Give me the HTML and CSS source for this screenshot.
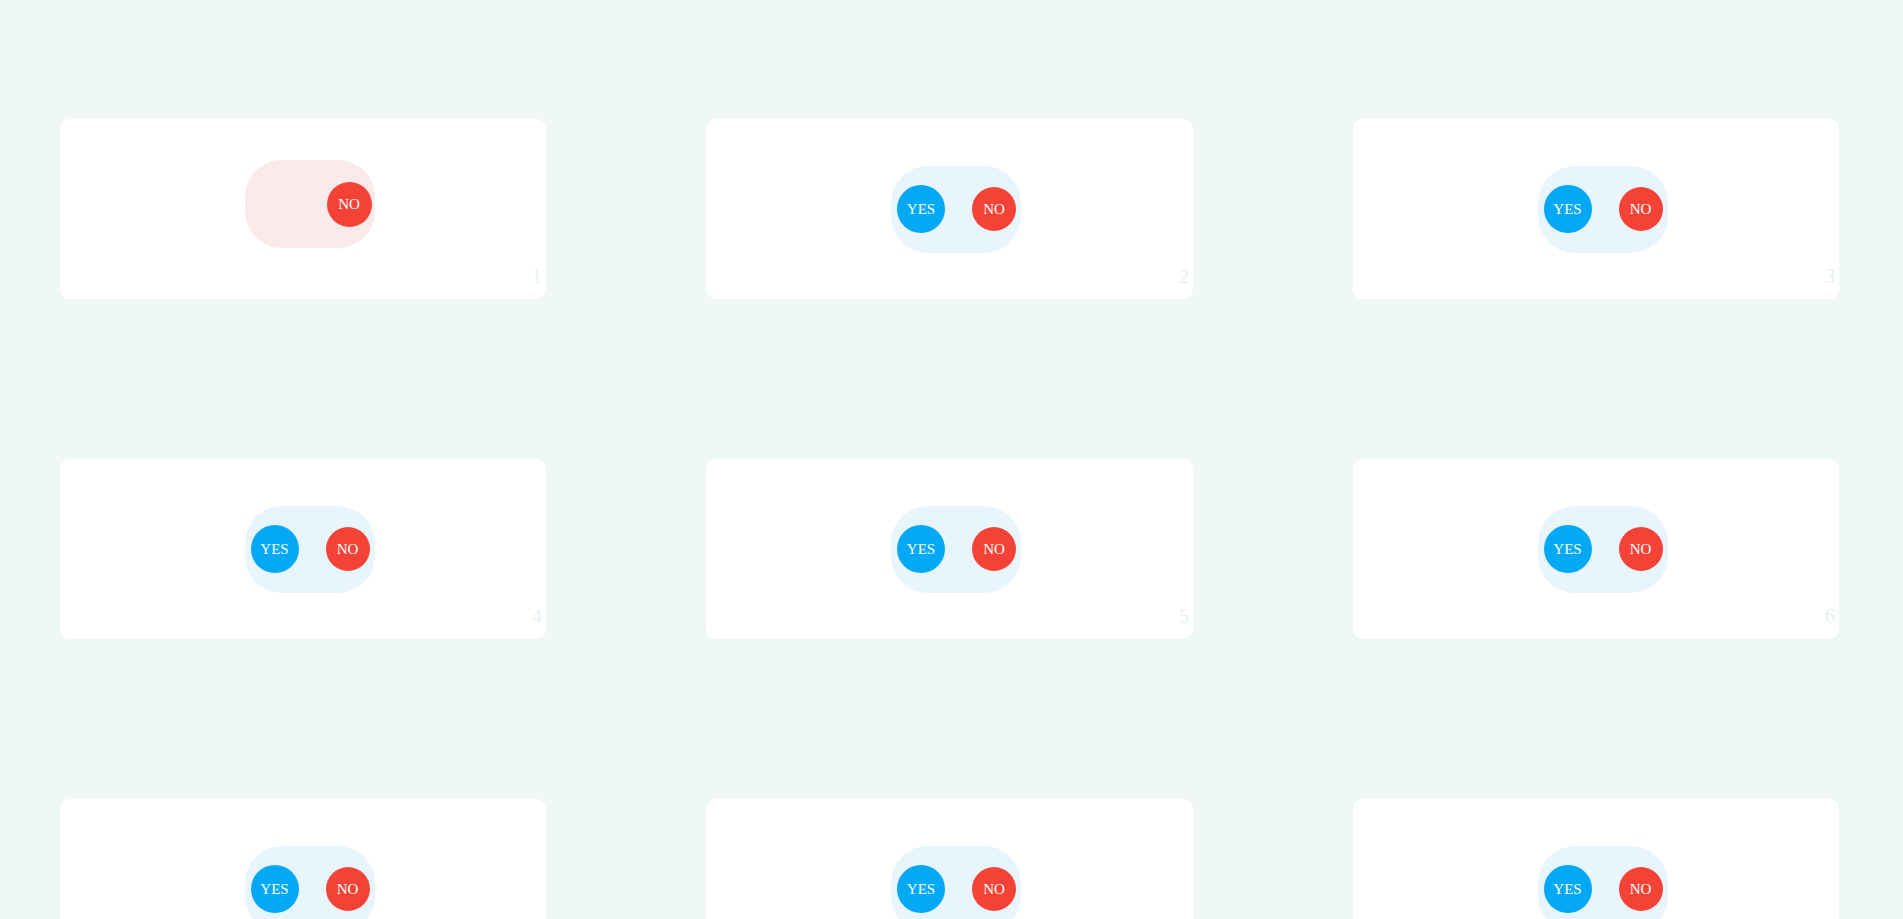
FILE: index.html
```html
<!DOCTYPE html>
<html>
<head>
<meta charset="utf-8">
<link rel="stylesheet" href="styles.css">
</head>
<body>
<main class="grid">
  <div class="card">
    <div class="pill pill-no">
      <span class="btn no no-solo">NO</span>
    </div>
    <span class="num">1</span>
  </div>
  <div class="card"><div class="pill"><span class="btn yes">YES</span><span class="btn no">NO</span></div><span class="num">2</span></div>
  <div class="card"><div class="pill"><span class="btn yes">YES</span><span class="btn no">NO</span></div><span class="num">3</span></div>
  <div class="card"><div class="pill"><span class="btn yes">YES</span><span class="btn no">NO</span></div><span class="num">4</span></div>
  <div class="card"><div class="pill"><span class="btn yes">YES</span><span class="btn no">NO</span></div><span class="num">5</span></div>
  <div class="card"><div class="pill"><span class="btn yes">YES</span><span class="btn no">NO</span></div><span class="num">6</span></div>
  <div class="card"><div class="pill"><span class="btn yes">YES</span><span class="btn no">NO</span></div><span class="num">7</span></div>
  <div class="card"><div class="pill"><span class="btn yes">YES</span><span class="btn no">NO</span></div><span class="num">8</span></div>
  <div class="card"><div class="pill"><span class="btn yes">YES</span><span class="btn no">NO</span></div><span class="num">9</span></div>
  <div class="card"><div class="pill"><span class="btn yes">YES</span><span class="btn no">NO</span></div><span class="num">10</span></div>
  <div class="card"><div class="pill"><span class="btn yes">YES</span><span class="btn no">NO</span></div><span class="num">11</span></div>
  <div class="card"><div class="pill"><span class="btn yes">YES</span><span class="btn no">NO</span></div><span class="num">12</span></div>
  <div class="card"><div class="pill"><span class="btn yes">YES</span><span class="btn no">NO</span></div><span class="num">13</span></div>
  <div class="card"><div class="pill"><span class="btn yes">YES</span><span class="btn no">NO</span></div><span class="num">14</span></div>
  <div class="card"><div class="pill"><span class="btn yes">YES</span><span class="btn no">NO</span></div><span class="num">15</span></div>
  <div class="card"><div class="pill"><span class="btn yes">YES</span><span class="btn no">NO</span></div><span class="num">16</span></div>
  <div class="card"><div class="pill"><span class="btn yes">YES</span><span class="btn no">NO</span></div><span class="num">17</span></div>
  <div class="card"><div class="pill"><span class="btn yes">YES</span><span class="btn no">NO</span></div><span class="num">18</span></div>
</main>
</body>
</html>
```
FILE: styles.css
```css
html, body {
  margin: 0;
  padding: 0;
  background: #eff8f7;
  font-family: "Liberation Serif", "Times New Roman", serif;
}

html::-webkit-scrollbar {
  width: 15px;
  background: #f1f1f1;
}

html::-webkit-scrollbar-thumb {
  background: #c1c1c1;
  border: 4px solid #f1f1f1;
  border-top-width: 17px;
}

.grid {
  display: grid;
  grid-template-columns: 486px 487px 486px;
  column-gap: 160px;
  row-gap: 160px;
  padding: 119px 0 119px 60px;
}

.card {
  position: relative;
  height: 180px;
  background: #ffffff;
  border-radius: 10px;
  display: flex;
  align-items: center;
  justify-content: center;
  padding-left: 13px;
}

.pill {
  width: 130px;
  height: 87px;
  box-sizing: border-box;
  border-radius: 37px;
  background: #e9f5fc;
  display: flex;
  align-items: center;
  justify-content: space-between;
  padding: 0 5px 0 6px;
}

.pill-no {
  height: 88px;
  background: #fbeaea;
  justify-content: flex-end;
  padding: 0 3px 0 0;
  transform: translateY(-5px);
}

.btn {
  display: flex;
  align-items: center;
  justify-content: center;
  border-radius: 50%;
  color: #ffffff;
  font-size: 15px;
  line-height: 1;
}

.yes {
  width: 48px;
  height: 48px;
  background: #03a9f4;
}

.no {
  width: 44px;
  height: 44px;
  background: #f44336;
}

.no-solo {
  width: 45px;
  height: 45px;
}

.num {
  position: absolute;
  right: 4px;
  bottom: 13px;
  font-size: 20px;
  line-height: 1;
  color: #e4f1f5;
}
```
